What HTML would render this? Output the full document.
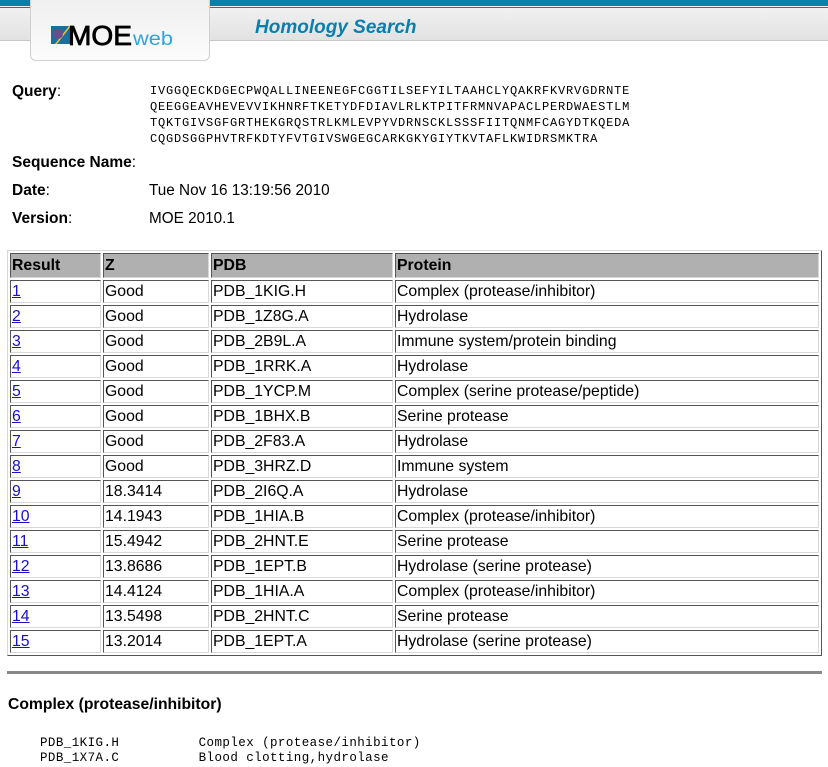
<!DOCTYPE html>
<html><head><style>
body{margin:0;width:828px;height:767px;overflow:hidden;background:#fff;font-family:"Liberation Sans",Arial,sans-serif;font-size:15px;color:#000;position:relative}
.hdr{position:absolute;left:0;top:0;width:828px;height:40px;background:linear-gradient(#f4f4f4,#e2e2e2);border-bottom:1px solid #c8c8c8}
.bar{position:absolute;left:0;top:0;width:828px;height:6px;background:#0a7fae}
.bar2{position:absolute;left:0;top:7px;width:828px;height:1px;background:#0a7fae}
.logo{position:absolute;left:30px;top:-2px;width:178px;height:61px;background:linear-gradient(#efefef,#fcfcfc);border:1px solid #cfcfcf;border-radius:0 0 6px 6px}
.title{position:absolute;left:255px;top:17px;font-weight:bold;font-style:italic;font-size:19px;color:#0a7fae}
.lbl{position:absolute;left:12px;font-size:15.5px}
.lbl b{font-weight:bold}
.val{position:absolute;left:149px;font-size:15.3px}
.q{position:absolute;left:150px;top:83px;font-family:"Liberation Mono",monospace;font-size:12px;letter-spacing:0.8px;line-height:16px;margin:0;white-space:pre}
table{position:absolute;left:7px;top:250px;width:815px;border-collapse:separate;border-spacing:2px;border:1px solid;border-color:#d8d8d8 #555 #555 #d8d8d8}
td,th{border:1px solid;border-color:#555 #d8d8d8 #d8d8d8 #555;height:21px;padding:0 1px;text-align:left;font-size:15.8px}
th{background:#b0b0b0;font-weight:bold;height:23px}
a{color:#1a0dcc}
.hr{position:absolute;left:7px;top:671px;width:815px;height:3px;background:#888}
.h3{position:absolute;left:8px;top:696px;font-weight:bold;font-size:15.7px}
.p{position:absolute;left:40px;top:736px;font-family:"Liberation Mono",monospace;font-size:12.5px;letter-spacing:0.43px;line-height:15px;margin:0;white-space:pre}
</style></head><body>
<div class="hdr"></div><div class="bar"></div><div class="bar2"></div>
<div class="logo">
<svg width="178" height="61" style="position:absolute;left:0;top:0">
<rect x="20" y="27" width="20" height="18" fill="#1a6fa0"/>
<polygon points="24,45 38,27 40,27 26,45" fill="#e8c030"/>
<circle cx="27" cy="35" r="5" fill="#6a4c8c"/>
<text x="37" y="46" font-family="Liberation Sans,sans-serif" font-size="28" fill="#000" stroke="#000" stroke-width="0.8" textLength="64" lengthAdjust="spacingAndGlyphs">MOE</text>
<text x="102" y="46" font-family="Liberation Sans,sans-serif" font-size="19" fill="#2aa6e0" textLength="40" lengthAdjust="spacingAndGlyphs">web</text>
</svg></div>
<div class="title">Homology Search</div>
<div class="lbl" style="top:83px"><b>Query</b>:</div>
<pre class="q">IVGGQECKDGECPWQALLINEENEGFCGGTILSEFYILTAAHCLYQAKRFKVRVGDRNTE
QEEGGEAVHEVEVVIKHNRFTKETYDFDIAVLRLKTPITFRMNVAPACLPERDWAESTLM
TQKTGIVSGFGRTHEKGRQSTRLKMLEVPYVDRNSCKLSSSFIITQNMFCAGYDTKQEDA
CQGDSGGPHVTRFKDTYFVTGIVSWGEGCARKGKYGIYTKVTAFLKWIDRSMKTRA</pre>
<div class="lbl" style="top:154px"><b>Sequence Name</b>:</div>
<div class="lbl" style="top:182px"><b>Date</b>:</div>
<div class="val" style="top:182px">Tue Nov 16 13:19:56 2010</div>
<div class="lbl" style="top:210px"><b>Version</b>:</div>
<div class="val" style="top:210px">MOE 2010.1</div>
<table>
<tr><th style="width:87px">Result</th><th style="width:102px">Z</th><th style="width:178px">PDB</th><th>Protein</th></tr>
<tr><td><a href="#">1</a></td><td>Good</td><td>PDB_1KIG.H</td><td>Complex (protease/inhibitor)</td></tr>
<tr><td><a href="#">2</a></td><td>Good</td><td>PDB_1Z8G.A</td><td>Hydrolase</td></tr>
<tr><td><a href="#">3</a></td><td>Good</td><td>PDB_2B9L.A</td><td>Immune system/protein binding</td></tr>
<tr><td><a href="#">4</a></td><td>Good</td><td>PDB_1RRK.A</td><td>Hydrolase</td></tr>
<tr><td><a href="#">5</a></td><td>Good</td><td>PDB_1YCP.M</td><td>Complex (serine protease/peptide)</td></tr>
<tr><td><a href="#">6</a></td><td>Good</td><td>PDB_1BHX.B</td><td>Serine protease</td></tr>
<tr><td><a href="#">7</a></td><td>Good</td><td>PDB_2F83.A</td><td>Hydrolase</td></tr>
<tr><td><a href="#">8</a></td><td>Good</td><td>PDB_3HRZ.D</td><td>Immune system</td></tr>
<tr><td><a href="#">9</a></td><td>18.3414</td><td>PDB_2I6Q.A</td><td>Hydrolase</td></tr>
<tr><td><a href="#">10</a></td><td>14.1943</td><td>PDB_1HIA.B</td><td>Complex (protease/inhibitor)</td></tr>
<tr><td><a href="#">11</a></td><td>15.4942</td><td>PDB_2HNT.E</td><td>Serine protease</td></tr>
<tr><td><a href="#">12</a></td><td>13.8686</td><td>PDB_1EPT.B</td><td>Hydrolase (serine protease)</td></tr>
<tr><td><a href="#">13</a></td><td>14.4124</td><td>PDB_1HIA.A</td><td>Complex (protease/inhibitor)</td></tr>
<tr><td><a href="#">14</a></td><td>13.5498</td><td>PDB_2HNT.C</td><td>Serine protease</td></tr>
<tr><td><a href="#">15</a></td><td>13.2014</td><td>PDB_1EPT.A</td><td>Hydrolase (serine protease)</td></tr>
</table>
<div class="hr"></div>
<div class="h3">Complex (protease/inhibitor)</div>
<pre class="p">PDB_1KIG.H          Complex (protease/inhibitor)
PDB_1X7A.C          Blood clotting,hydrolase</pre>
</body></html>
